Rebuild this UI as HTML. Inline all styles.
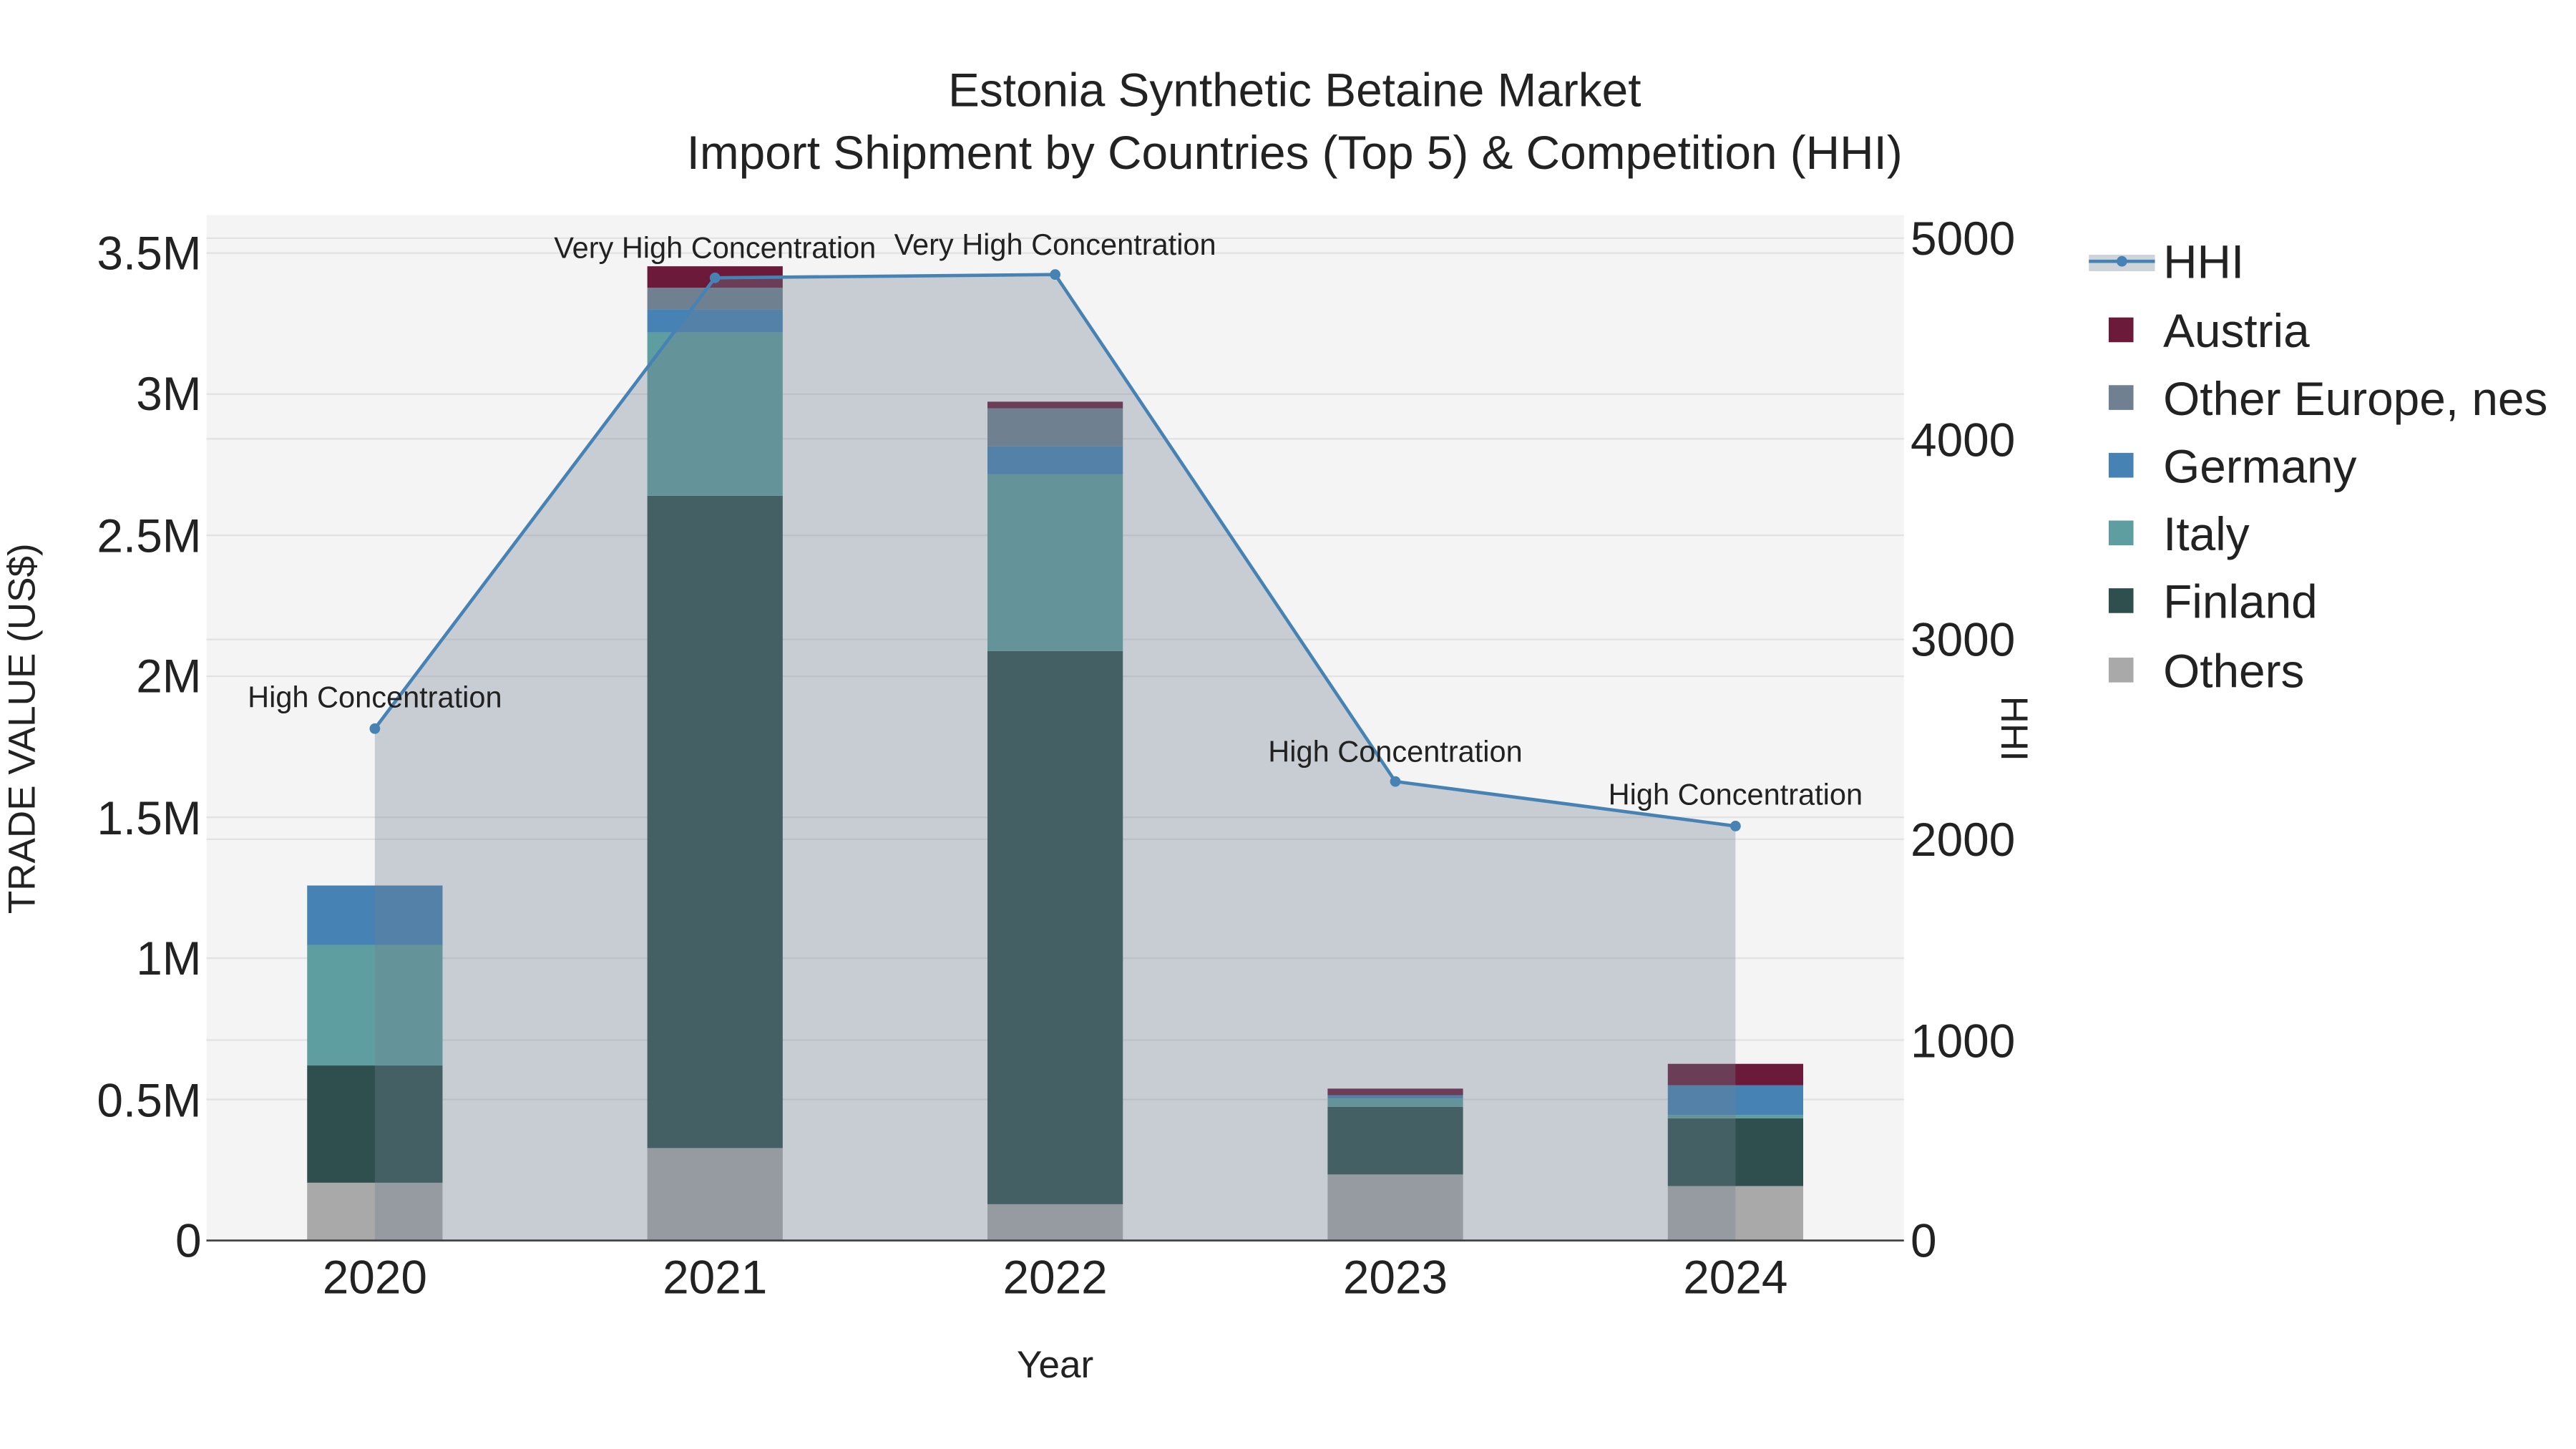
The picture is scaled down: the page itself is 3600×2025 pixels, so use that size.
<!DOCTYPE html>
<html><head><meta charset="utf-8"><style>
html,body{margin:0;padding:0;background:#fff;}
svg{display:block;}
text{font-family:"Liberation Sans",sans-serif;fill:#222;}
</style></head><body>
<svg width="3600" height="2025" viewBox="0 0 1560 877" xmlns="http://www.w3.org/2000/svg">
<rect x="0" y="0" width="1560" height="877" fill="#fff"/>
<rect x="125" y="130" width="1028" height="621" fill="#f4f4f4"/>
<g stroke="#e2e2e2" stroke-width="1">
<line x1="125" x2="1153" y1="665.6" y2="665.6"/><line x1="125" x2="1153" y1="580" y2="580"/>
<line x1="125" x2="1153" y1="494.7" y2="494.7"/><line x1="125" x2="1153" y1="409.3" y2="409.3"/>
<line x1="125" x2="1153" y1="323.9" y2="323.9"/><line x1="125" x2="1153" y1="238.4" y2="238.4"/>
<line x1="125" x2="1153" y1="153" y2="153"/>
<line x1="125" x2="1153" y1="629.6" y2="629.6"/><line x1="125" x2="1153" y1="508" y2="508"/>
<line x1="125" x2="1153" y1="387" y2="387"/><line x1="125" x2="1153" y1="265.5" y2="265.5"/>
<line x1="125" x2="1153" y1="144" y2="144"/>
</g>
<g>
<rect x="186" y="716" width="82" height="35" fill="#a9a9a9"/>
<rect x="186" y="645" width="82" height="71" fill="#2f4f4f"/>
<rect x="186" y="572" width="82" height="73" fill="#5f9ea0"/>
<rect x="186" y="536" width="82" height="36" fill="#4682b4"/>

<rect x="392" y="695" width="82" height="56" fill="#a9a9a9"/>
<rect x="392" y="300" width="82" height="395" fill="#2f4f4f"/>
<rect x="392" y="201" width="82" height="99" fill="#5f9ea0"/>
<rect x="392" y="187" width="82" height="14" fill="#4682b4"/>
<rect x="392" y="174" width="82" height="13" fill="#708090"/>
<rect x="392" y="161" width="82" height="13" fill="#6b1a3a"/>

<rect x="598" y="729" width="82" height="22" fill="#a9a9a9"/>
<rect x="598" y="394" width="82" height="335" fill="#2f4f4f"/>
<rect x="598" y="287" width="82" height="107" fill="#5f9ea0"/>
<rect x="598" y="270" width="82" height="17" fill="#4682b4"/>
<rect x="598" y="247" width="82" height="23" fill="#708090"/>
<rect x="598" y="243" width="82" height="4" fill="#6b1a3a"/>

<rect x="804" y="711" width="82" height="40" fill="#a9a9a9"/>
<rect x="804" y="670" width="82" height="41" fill="#2f4f4f"/>
<rect x="804" y="665" width="82" height="5" fill="#5f9ea0"/>
<rect x="804" y="663" width="82" height="2" fill="#4682b4"/>
<rect x="804" y="659" width="82" height="4" fill="#6b1a3a"/>

<rect x="1010" y="718" width="82" height="33" fill="#a9a9a9"/>
<rect x="1010" y="677" width="82" height="41" fill="#2f4f4f"/>
<rect x="1010" y="675" width="82" height="2" fill="#5f9ea0"/>
<rect x="1010" y="657" width="82" height="18" fill="#4682b4"/>
<rect x="1010" y="644" width="82" height="13" fill="#6b1a3a"/>
</g>
<polygon points="227,751 227,441 433,168 639,166 845,473 1051,500 1051,751" fill="#708090" fill-opacity="0.34"/>
<line x1="125" x2="1153" y1="751" y2="751" stroke="#444" stroke-width="1.2"/>
<polyline points="227,441 433,168 639,166 845,473 1051,500" fill="none" stroke="#4682b4" stroke-width="2"/>
<g fill="#4682b4"><circle cx="227" cy="441" r="3.2"/><circle cx="433" cy="168" r="3.2"/><circle cx="639" cy="166" r="3.2"/><circle cx="845" cy="473" r="3.2"/><circle cx="1051" cy="500" r="3.2"/></g>
<g font-size="18" text-anchor="middle">
<text x="227" y="428">High Concentration</text>
<text x="433" y="156">Very High Concentration</text>
<text x="639" y="154">Very High Concentration</text>
<text x="845" y="461">High Concentration</text>
<text x="1051" y="487">High Concentration</text>
</g>
<g text-anchor="middle" font-size="28.5">
<text x="784" y="64">Estonia Synthetic Betaine Market</text>
<text x="784" y="102">Import Shipment by Countries (Top 5) &amp; Competition (HHI)</text>
</g>
<g font-size="28.5" text-anchor="end">
<text x="122" y="761">0</text><text x="122" y="676">0.5M</text><text x="122" y="590">1M</text>
<text x="122" y="505">1.5M</text><text x="122" y="419">2M</text><text x="122" y="334">2.5M</text>
<text x="122" y="248">3M</text><text x="122" y="163">3.5M</text>
</g>
<g font-size="28.5" text-anchor="start">
<text x="1157" y="761">0</text><text x="1157" y="640">1000</text><text x="1157" y="518">2000</text>
<text x="1157" y="397">3000</text><text x="1157" y="276">4000</text><text x="1157" y="154">5000</text>
</g>
<g font-size="28.5" text-anchor="middle">
<text x="227" y="783">2020</text><text x="433" y="783">2021</text><text x="639" y="783">2022</text>
<text x="845" y="783">2023</text><text x="1051" y="783">2024</text>
</g>
<text x="639" y="834" font-size="23" text-anchor="middle">Year</text>
<text transform="translate(21,441) rotate(-90)" font-size="23" text-anchor="middle">TRADE VALUE (US$)</text>
<text transform="translate(1212,441) rotate(90)" font-size="23" text-anchor="middle">HHI</text>
<rect x="1265" y="154" width="40" height="10" fill="#708090" fill-opacity="0.34"/>
<line x1="1265" x2="1305" y1="158" y2="158" stroke="#4682b4" stroke-width="2"/>
<circle cx="1285" cy="158" r="3.2" fill="#4682b4"/>
<text x="1310" y="168" font-size="28.5">HHI</text>
<rect x="1277" y="192" width="15" height="15" fill="#6b1a3a"/><text x="1310" y="210" font-size="28.5">Austria</text>
<rect x="1277" y="233" width="15" height="15" fill="#708090"/><text x="1310" y="251" font-size="28.5">Other Europe, nes</text>
<rect x="1277" y="274" width="15" height="15" fill="#4682b4"/><text x="1310" y="292" font-size="28.5">Germany</text>
<rect x="1277" y="315" width="15" height="15" fill="#5f9ea0"/><text x="1310" y="333" font-size="28.5">Italy</text>
<rect x="1277" y="356" width="15" height="15" fill="#2f4f4f"/><text x="1310" y="374" font-size="28.5">Finland</text>
<rect x="1277" y="398" width="15" height="15" fill="#a9a9a9"/><text x="1310" y="416" font-size="28.5">Others</text>
</svg>
</body></html>
